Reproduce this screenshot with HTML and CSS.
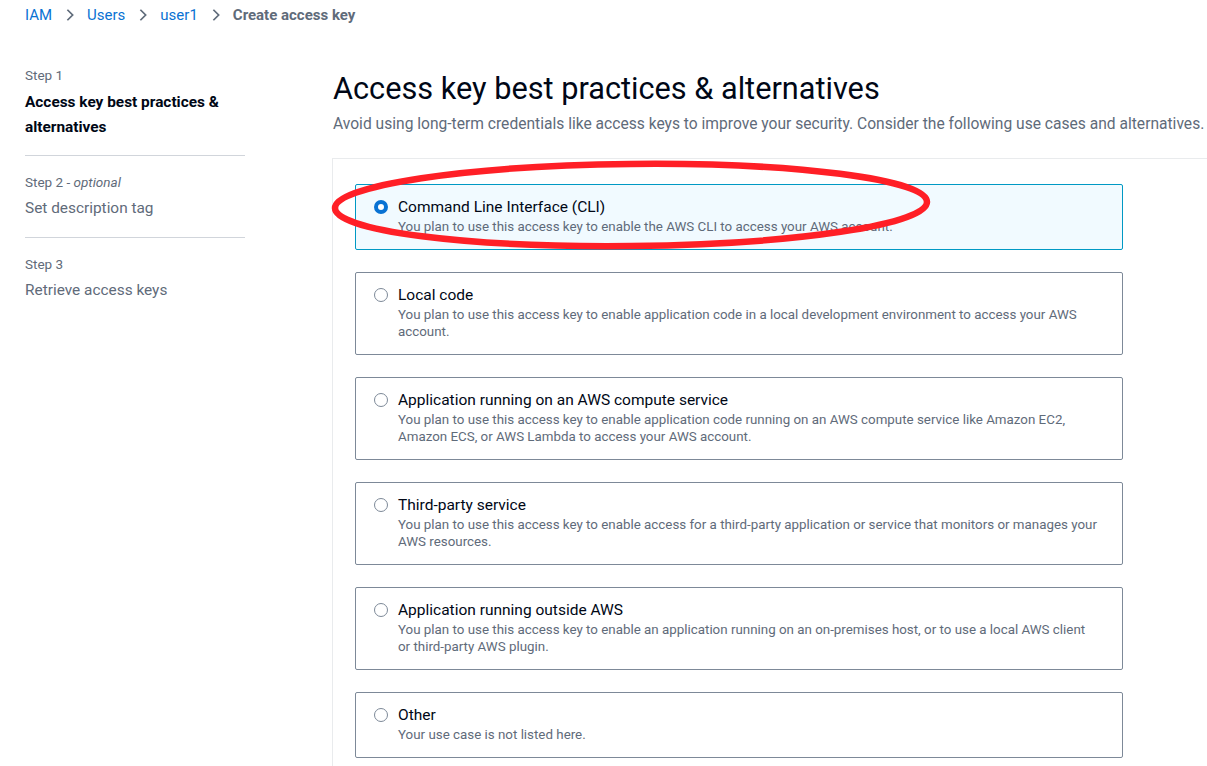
FILE: index.html
```html
<!DOCTYPE html>
<html lang="en">
<head>
<meta charset="utf-8">
<title>Create access key</title>
<link rel="stylesheet" href="styles.css">
</head>
<body>
<nav class="crumbs">
  <a class="crumb-link">IAM</a>
  <svg class="chev" viewBox="0 0 16 16"><path d="M5 2l6 6-6 6" fill="none" stroke="#5f6b7a" stroke-width="2"/></svg>
  <a class="crumb-link">Users</a>
  <svg class="chev" viewBox="0 0 16 16"><path d="M5 2l6 6-6 6" fill="none" stroke="#5f6b7a" stroke-width="2"/></svg>
  <a class="crumb-link">user1</a>
  <svg class="chev" viewBox="0 0 16 16"><path d="M5 2l6 6-6 6" fill="none" stroke="#5f6b7a" stroke-width="2"/></svg>
  <span class="crumb-current">Create access key</span>
</nav>
<div class="layout">
  <aside class="steps">
    <div class="step">
      <div class="step-label">Step 1</div>
      <div class="step-title active">Access key best practices &amp; alternatives</div>
    </div>
    <div class="step">
      <div class="step-label">Step 2 - <i>optional</i></div>
      <div class="step-title">Set description tag</div>
    </div>
    <div class="step">
      <div class="step-label">Step 3</div>
      <div class="step-title">Retrieve access keys</div>
    </div>
  </aside>
  <main class="main">
    <h1 class="title">Access key best practices &amp; alternatives</h1>
    <p class="subtitle">Avoid using long-term credentials like access keys to improve your security. Consider the following use cases and alternatives.</p>
    <section class="panel">
      <div class="options">
        <label class="option selected">
          <span class="radio checked"></span>
          <span class="option-text">
            <span class="option-title">Command Line Interface (CLI)</span>
            <span class="option-desc">You plan to use this access key to enable the AWS CLI to access your AWS account.</span>
          </span>
        </label>
        <label class="option">
          <span class="radio"></span>
          <span class="option-text">
            <span class="option-title">Local code</span>
            <span class="option-desc">You plan to use this access key to enable application code in a local development environment to access your AWS account.</span>
          </span>
        </label>
        <label class="option">
          <span class="radio"></span>
          <span class="option-text">
            <span class="option-title">Application running on an AWS compute service</span>
            <span class="option-desc">You plan to use this access key to enable application code running on an AWS compute service like Amazon EC2, Amazon ECS, or AWS Lambda to access your AWS account.</span>
          </span>
        </label>
        <label class="option">
          <span class="radio"></span>
          <span class="option-text">
            <span class="option-title">Third-party service</span>
            <span class="option-desc">You plan to use this access key to enable access for a third-party application or service that monitors or manages your AWS resources.</span>
          </span>
        </label>
        <label class="option">
          <span class="radio"></span>
          <span class="option-text">
            <span class="option-title">Application running outside AWS</span>
            <span class="option-desc">You plan to use this access key to enable an application running on an on-premises host, or to use a local AWS client or third-party AWS plugin.</span>
          </span>
        </label>
        <label class="option">
          <span class="radio"></span>
          <span class="option-text">
            <span class="option-title">Other</span>
            <span class="option-desc">Your use case is not listed here.</span>
          </span>
        </label>
      </div>
    </section>
  </main>
</div>
<svg class="annotation" viewBox="0 0 1207 766" width="1207" height="766">
  <ellipse cx="631" cy="205" rx="296" ry="41" fill="none" stroke="#ff1f26" stroke-width="6.5" transform="rotate(-0.6 631 205)"/>
</svg>
</body>
</html>
```
FILE: styles.css
```css
* { box-sizing: border-box; }
html, body { margin: 0; padding: 0; background: #ffffff; }
body {
  font-family: Roboto, "Open Sans", "Liberation Sans", sans-serif;
  color: #000716;
  width: 1207px;
  height: 766px;
  overflow: hidden;
  position: relative;
}
.crumbs {
  display: flex;
  align-items: center;
  height: 30px;
  padding-left: 25px;
  font-size: 15px;
}
.crumb-link { color: #0972d3; text-decoration: none; }
.crumb-current { color: #5f6b7a; font-weight: 700; }
.chev { width: 14px; height: 14px; margin: 0 10px 0 11px; }

.layout {
  display: flex;
  padding-left: 25px;
  gap: 88px;
}
.steps {
  width: 220px;
  flex: none;
  padding-top: 35px;
}
.step {
  padding: 0 0 15px;
  border-bottom: 1px solid #d1d5db;
  margin-bottom: 16px;
}
.step + .step .step-title { margin-top: 4px; }
.step + .step { padding-bottom: 16px; }
.step:last-child { border-bottom: none; }
.step-label {
  font-size: 13.5px;
  color: #5f6b7a;
  line-height: 20px;
}
.step-label i { font-style: italic; }
.step-title {
  font-size: 15.4px;
  line-height: 25px;
  color: #5f6b7a;
  margin-top: 5px;
}
.step-title.active { color: #000716; font-weight: 700; }

.main { flex: 1; min-width: 0; padding-top: 40px; }
.title {
  margin: 0;
  font-size: 30.7px;
  font-weight: 400;
  line-height: 38px;
  color: #000716;
}
.subtitle {
  margin: 5px 0 0;
  font-size: 15.6px;
  line-height: 22px;
  color: #5f6b7a;
  white-space: nowrap;
}
.panel {
  margin: 23px 0 0 -1px;
  border-top: 1px solid #e9ebed;
  border-left: 1px solid #e9ebed;
  padding: 25px 0 0 22px;
  height: 620px;
}
.options {
  display: flex;
  flex-direction: column;
  gap: 22px;
  width: 768px;
}
.option {
  display: flex;
  align-items: flex-start;
  border: 1px solid #7d8998;
  border-radius: 2px;
  padding: 11px 22px 14px 18px;
  background: #ffffff;
}
.option.selected {
  border-color: #0099c4;
  background: #f1faff;
}
.radio {
  flex: none;
  width: 14px;
  height: 14px;
  border-radius: 50%;
  border: 1.5px solid #7d8998;
  margin-top: 4px;
  margin-right: 10px;
  background: #fff;
}
.radio.checked { border: 4px solid #0972d3; }
.option-text { display: flex; flex-direction: column; }
.option-title {
  font-size: 15.5px;
  line-height: 22px;
  color: #000716;
}
.option-desc {
  font-size: 13.35px;
  line-height: 17px;
  color: #5f6b7a;
}
.annotation {
  position: absolute;
  left: 0;
  top: 0;
  pointer-events: none;
}
```
